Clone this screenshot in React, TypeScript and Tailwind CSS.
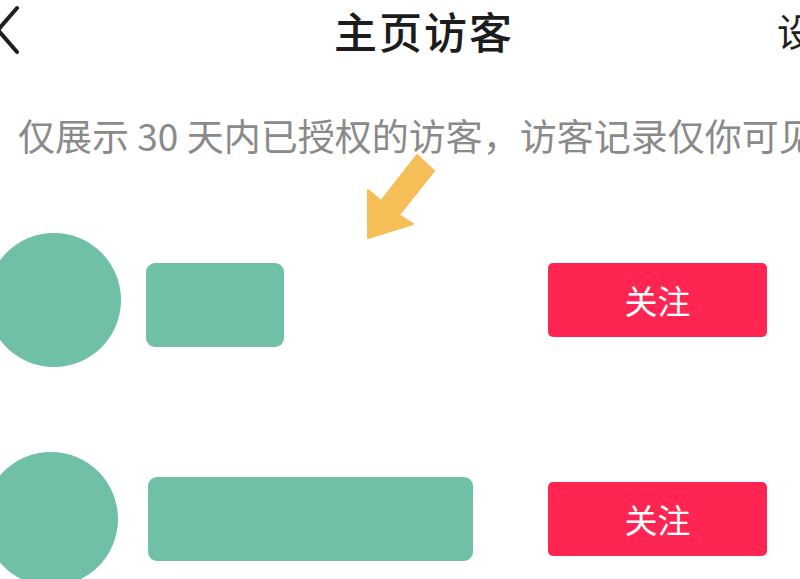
import React from 'react';

const font = { fontFamily: '"Noto Sans CJK SC", "Noto Sans", sans-serif' };

function VisitorRow({ barClass, circleClass, className }: { barClass: string; circleClass: string; className?: string }) {
  return (
    <div className={`flex items-center ${className ?? ''}`}>
      <div className={`shrink-0 w-[134px] h-[134px] rounded-full bg-[#70bfa7] ${circleClass}`} />
      <div className={`shrink-0 rounded-[9px] bg-[#70bfa7] ${barClass}`} />
      <button className="shrink-0 ml-auto mr-[33px] w-[219px] h-[74px] rounded-[5px] bg-[#fe2553] text-white text-[33px] leading-none flex items-center justify-center">
        关注
      </button>
    </div>
  );
}

export default function App() {
  return (
    <div className="relative w-[800px] h-[579px] overflow-hidden bg-white" style={font}>
      {/* header */}
      <div className="flex items-center h-[60px] whitespace-nowrap">
        <svg className="shrink-0 ml-[-4px]" width="24" height="50" viewBox="0 0 24 50" fill="none">
          <path d="M21 3 L2 25 L21 47" stroke="#1f1f1f" strokeWidth="4" strokeLinecap="round" strokeLinejoin="round" />
        </svg>
        <h1 className="shrink-0 ml-[314px] text-[43px] leading-none font-medium tracking-[2px] text-[#1c1c1c]">主页访客</h1>
        <span className="shrink-0 ml-[263px] text-[38px] leading-none text-[#222]">设置</span>
      </div>

      {/* notice */}
      <p className="mt-[57px] pl-[18px] whitespace-nowrap text-[37px] leading-none text-[#8a8a8a]">
        仅展示 30 天内已授权的访客，访客记录仅你可见
      </p>

      {/* visitors */}
      <div className="mt-[79px] flex flex-col gap-[85px]">
        <VisitorRow circleClass="ml-[-13px]" barClass="ml-[25px] mt-[10px] w-[138px] h-[84px]" />
        <VisitorRow circleClass="ml-[-16px]" barClass="ml-[30px] w-[325px] h-[84px]" />
      </div>

      {/* annotation arrow */}
      <svg className="absolute left-0 top-0 pointer-events-none" width="800" height="579" viewBox="0 0 800 579">
        <polygon
          points="417,155 434,171 399,215 413,224 368,238 368,190 381,201"
          fill="#f5be57"
          stroke="#f5be57"
          strokeWidth="2"
          strokeLinejoin="round"
        />
      </svg>
    </div>
  );
}
